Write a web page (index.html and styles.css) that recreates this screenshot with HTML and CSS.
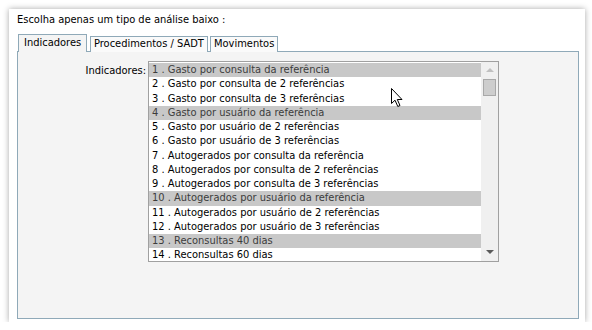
FILE: index.html
```html
<!DOCTYPE html>
<html lang="pt">

<head>
    <meta charset="UTF-8">
    <title>Tipo de análise</title>
    <link rel="stylesheet" href="styles.css">
</head>

<body>
    <div class="card">
        <p class="titulo">Escolha apenas um tipo de análise baixo :</p>
        <nav class="abas">
            <span class="aba ativa">Indicadores</span>
            <span class="aba proc">Procedimentos / SADT</span>
            <span class="aba mov">Movimentos</span>
        </nav>
        <section class="painel">
            <label class="rotulo">Indicadores:</label>
            <div class="lista">
                <ul>
                    <li class="marcado">1 . Gasto por consulta da referência</li>
                    <li>2 . Gasto por consulta de 2 referências</li>
                    <li>3 . Gasto por consulta de 3 referências</li>
                    <li class="marcado">4 . Gasto por usuário da referência</li>
                    <li>5 . Gasto por usuário de 2 referências</li>
                    <li>6 . Gasto por usuário de 3 referências</li>
                    <li>7 . Autogerados por consulta da referência</li>
                    <li>8 . Autogerados por consulta de 2 referências</li>
                    <li>9 . Autogerados por consulta de 3 referências</li>
                    <li class="marcado">10 . Autogerados por usuário da referência</li>
                    <li>11 . Autogerados por usuário de 2 referências</li>
                    <li>12 . Autogerados por usuário de 3 referências</li>
                    <li class="marcado">13 . Reconsultas 40 dias</li>
                    <li>14 . Reconsultas 60 dias</li>
                </ul>
                <div class="rolagem">
                    <span class="seta cima"></span>
                    <span class="polegar"></span>
                    <span class="seta baixo"></span>
                </div>
            </div>
        </section>
    </div>
    <svg class="cursor" width="13" height="20" viewBox="0 0 13 20">
        <path d="M0.5 0.5 L0.5 15.5 L4 12.2 L6.8 18.5 L9 17.5 L6.3 11.5 L11 11.5 Z" fill="#fff" stroke="#000" stroke-width="1"/>
    </svg>
</body>

</html>
```

FILE: styles.css
```css
* {
    box-sizing: border-box;
    padding: 0;
    margin: 0;
}

body {
    font-family: "DejaVu Sans Condensed", "DejaVu Sans", sans-serif;
    font-stretch: semi-condensed;
    font-size: 11px;
    color: #000;
    background: #fff;
}

.card {
    margin: 9px 0 0 9px;
    width: 576px;
    height: 313px;
    background: #fff;
    box-shadow: 0 0 6px rgba(0, 0, 0, .35);
    padding: 4px 0 0 8px;
}

.titulo {
    line-height: 13px;
    height: 21px;
}

.abas {
    display: flex;
    align-items: flex-end;
    height: 18px;
    padding-left: 1px;
}

.aba {
    height: 16px;
    line-height: 14px;
    padding-left: 3px;
    border: 1px solid #8fa9b8;
    border-bottom: none;
    background: #fafafa;
    white-space: nowrap;
    overflow: hidden;
}

.ativa {
    position: relative;
    z-index: 1;
    height: 18px;
    line-height: 16px;
    width: 69px;
    padding-left: 5px;
    background: #f4f4f4;
    margin-right: 3px;
}

.proc {
    width: 118px;
    margin-right: 2px;
}

.mov {
    width: 68px;
}

.painel {
    width: 562px;
    height: 268px;
    margin-top: -1px;
    border: 1px solid #8fa9b8;
    background: #f4f4f4;
    display: flex;
    align-items: flex-start;
    padding-top: 9px;
}

.rotulo {
    width: 128px;
    margin-right: 2px;
    text-align: right;
    padding-top: 3px;
}

.lista {
    display: flex;
    width: 351px;
    height: 201px;
    border: 1px solid #a0a0a0;
    background: #fff;
}

.lista ul {
    list-style: none;
    flex: 1;
    padding-top: 1px;
}

.lista li {
    height: 14.25px;
    line-height: 14px;
    padding-left: 3px;
    white-space: nowrap;
}

.lista li.marcado {
    background: #c8c8c8;
    color: #3c3c3c;
}

.rolagem {
    position: relative;
    width: 17px;
    background: #f0f0f0;
}

.seta {
    position: absolute;
    left: 5px;
    width: 0;
    height: 0;
    border-left: 4px solid transparent;
    border-right: 4px solid transparent;
}

.cima {
    top: 6px;
    border-bottom: 4px solid #c0c0c0;
}

.baixo {
    bottom: 7px;
    border-top: 4px solid #5a5a5a;
}

.polegar {
    position: absolute;
    left: 2px;
    top: 17px;
    width: 13px;
    height: 17px;
    background: #cdcdcd;
    border: 1px solid #a8a8a8;
}

.cursor {
    position: absolute;
    left: 391px;
    top: 88px;
}
```
